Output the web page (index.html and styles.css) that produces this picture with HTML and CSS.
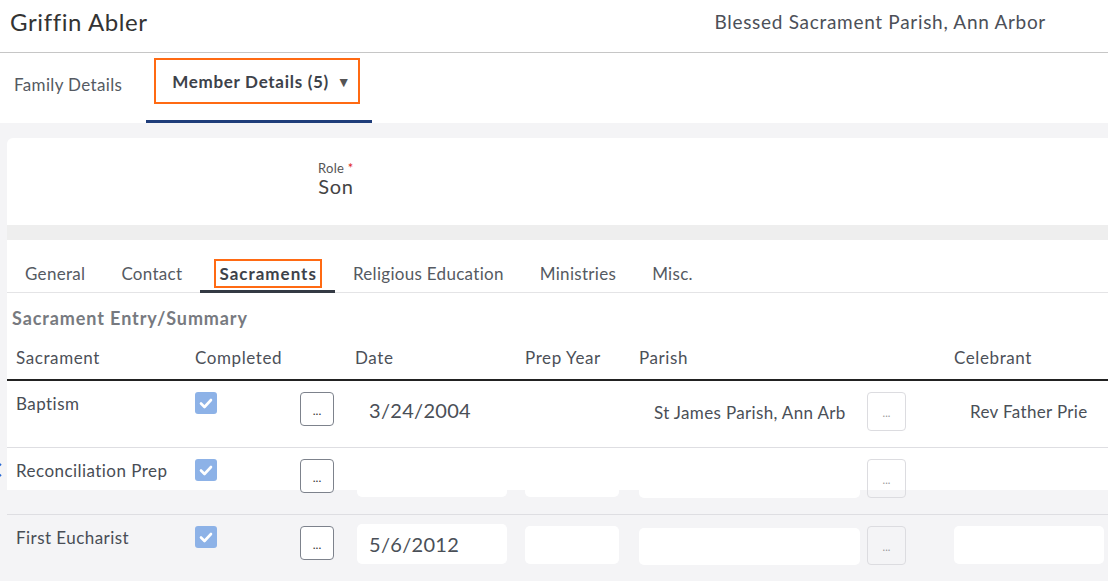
FILE: index.html
```html
<!DOCTYPE html>
<html lang="en">
<head>
<meta charset="utf-8">
<title>Griffin Abler</title>
<link rel="stylesheet" href="styles.css">
</head>
<body>
<header class="header">
  <div class="name">Griffin Abler</div>
  <div class="parish">Blessed Sacrament Parish, Ann Arbor</div>
</header>
<nav class="tabs">
  <div class="tab">Family Details</div>
  <div class="tab tab-active">
    <div class="tab-box">Member Details (5) <span class="caret">&#9660;</span></div>
  </div>
</nav>
<main class="content">
  <section class="card">
    <div class="role-area">
      <div class="field">
        <div class="field-label">Role <span class="req">*</span></div>
        <div class="field-value">Son</div>
      </div>
    </div>
    <div class="band"></div>
    <div class="subtabs">
      <div class="subtab">General</div>
      <div class="subtab">Contact</div>
      <div class="subtab subtab-active"><span class="hl">Sacraments</span></div>
      <div class="subtab">Religious Education</div>
      <div class="subtab">Ministries</div>
      <div class="subtab">Misc.</div>
    </div>
    <h2 class="section-title">Sacrament Entry/Summary</h2>
    <div class="table">
      <div class="trow thead">
        <div class="c c-sac">Sacrament</div>
        <div class="c c-done">Completed</div>
        <div class="c c-b1"></div>
        <div class="c c-date">Date</div>
        <div class="c c-prep">Prep Year</div>
        <div class="c c-par">Parish</div>
        <div class="c c-b2"></div>
        <div class="c c-cel">Celebrant</div>
      </div>

      <div class="trow row row-white">
        <div class="c c-sac"><span class="rtext">Baptism</span></div>
        <div class="c c-done"><span class="check"><svg viewBox="0 0 22 22" width="22" height="22"><path d="M6 11.5 L9.5 15 L16 8" fill="none" stroke="#fff" stroke-width="2.6" stroke-linecap="round" stroke-linejoin="round"/></svg></span></div>
        <div class="c c-b1"><span class="dots-btn">...</span></div>
        <div class="c c-date"><span class="inp inp-date">3/24/2004</span></div>
        <div class="c c-prep"><span class="inp inp-prep"></span></div>
        <div class="c c-par"><span class="inp inp-par"><span class="clip">St James Parish, Ann Arbor</span></span></div>
        <div class="c c-b2"><span class="dots-btn light">...</span></div>
        <div class="c c-cel"><span class="inp inp-cel"><span class="clip">Rev Father Priest</span></span></div>
      </div>

      <div class="trow row row-gray row-band">
        <svg class="edge-chev" viewBox="0 0 12 14" width="12" height="14"><path d="M10 1 L3 7 L10 13" fill="none" stroke="#2a6bd6" stroke-width="2"/></svg>
        <div class="c c-sac"><span class="rtext">Reconciliation Prep</span></div>
        <div class="c c-done"><span class="check"><svg viewBox="0 0 22 22" width="22" height="22"><path d="M6 11.5 L9.5 15 L16 8" fill="none" stroke="#fff" stroke-width="2.6" stroke-linecap="round" stroke-linejoin="round"/></svg></span></div>
        <div class="c c-b1"><span class="dots-btn">...</span></div>
        <div class="c c-date"><span class="inp inp-date"></span></div>
        <div class="c c-prep"><span class="inp inp-prep"></span></div>
        <div class="c c-par"><span class="inp inp-par"></span></div>
        <div class="c c-b2"><span class="dots-btn light clear">...</span></div>
        <div class="c c-cel"></div>
      </div>

      <div class="trow row row-gray">
        <div class="c c-sac"><span class="rtext">First Eucharist</span></div>
        <div class="c c-done"><span class="check"><svg viewBox="0 0 22 22" width="22" height="22"><path d="M6 11.5 L9.5 15 L16 8" fill="none" stroke="#fff" stroke-width="2.6" stroke-linecap="round" stroke-linejoin="round"/></svg></span></div>
        <div class="c c-b1"><span class="dots-btn">...</span></div>
        <div class="c c-date"><span class="inp inp-date">5/6/2012</span></div>
        <div class="c c-prep"><span class="inp inp-prep"></span></div>
        <div class="c c-par"><span class="inp inp-par"></span></div>
        <div class="c c-b2"><span class="dots-btn light clear">...</span></div>
        <div class="c c-cel"><span class="inp inp-cel"></span></div>
      </div>
    </div>
  </section>
</main>
</body>
</html>
```

FILE: styles.css
```css
* { box-sizing: border-box; }
html, body { margin: 0; padding: 0; }
body {
  width: 1108px;
  height: 581px;
  overflow: hidden;
  background: #f4f4f6;
  font-family: "Lato", "Open Sans", sans-serif;
  color: #484d55;
  letter-spacing: 0.35px;
}

.header {
  height: 53px;
  background: #fff;
  border-bottom: 1px solid #c6c6c6;
  display: flex;
  align-items: center;
  justify-content: space-between;
  padding: 0 62px 10px 10px;
}
.name { font-size: 24px; color: #333; letter-spacing: 0.6px; }
.parish { font-size: 19px; color: #4c5058; letter-spacing: 0.7px; }

.tabs {
  height: 70px;
  background: #fff;
  display: flex;
  align-items: stretch;
}
.tab {
  font-size: 17px;
  color: #555a62;
  padding: 0 14px;
  display: flex;
  align-items: center;
  padding-bottom: 8px;
}
.tab-active {
  width: 226px;
  margin-left: 10px;
  padding: 5px 12px 0 8px;
  align-items: flex-start;
  border-bottom: 3px solid #1f3d7a;
}
.tab-box {
  width: 206px;
  height: 46px;
  border: 2px solid #ff6a13;
  display: flex;
  align-items: center;
  justify-content: space-between;
  padding: 0 7px 0 16px;
  font-weight: 700;
  color: #3d424a;
  letter-spacing: 0.7px;
}
.caret { font-size: 14px; color: #555; }

.content { padding: 15px 0 0 7px; }
.card {
  background: #fff;
  border-top-left-radius: 6px;
  min-height: 460px;
}
.role-area {
  height: 87px;
  padding: 19px 0 0 311px;
}
.field { display: inline-flex; flex-direction: column; align-items: center; }
.field-label { font-size: 13px; color: #555; line-height: 16px; letter-spacing: 0.3px; }
.req { color: #e0251b; }
.field-value { font-size: 20px; color: #444; line-height: 20px; letter-spacing: 0.6px; }
.band { height: 15px; background: #eeeeee; }

.subtabs {
  display: flex;
  height: 53px;
  padding-top: 18px;
  border-bottom: 1px solid #e4e4e6;
}
.subtab {
  font-size: 17px;
  color: #555a62;
  padding: 0 18px;
  height: 35px;
  line-height: 31px;
  letter-spacing: 0.3px;
}
.subtab-active {
  padding: 0 17px 0 18px;
  border-bottom: 3px solid #343a44;
  font-weight: 700;
  color: #3d424a;
  letter-spacing: 1px;
}
.hl {
  outline: 2px solid #ff6a13;
  outline-offset: 2px;
  padding: 0 1px;
}

.section-title {
  margin: 0;
  font-size: 18px;
  font-weight: 700;
  color: #777a80;
  padding: 14px 0 0 5px;
  height: 50px;
  letter-spacing: 0.9px;
}

.trow {
  display: grid;
  grid-template-columns: 188px 105px 55px 170px 114px 228px 87px 1fr;
}
.thead {
  height: 38px;
  border-bottom: 2px solid #222;
  font-size: 17px;
  color: #4c5058;
  letter-spacing: 0.6px;
}
.thead .c { padding-top: 4px; white-space: nowrap; }
.thead .c-sac { padding-left: 9px; }

.row {
  position: relative;
  height: 67px;
  border-bottom: 1px solid #dedee2;
}
.row-white { background: #fff; }
.row-gray { background: #f4f4f6; }
.row-band::before {
  content: "";
  position: absolute;
  left: 0; right: 0; top: 0;
  height: 42px;
  background: #fff;
}
.row .c { position: relative; }
.rtext {
  display: block;
  padding: 11px 0 0 9px;
  font-size: 17px;
  line-height: 24px;
  color: #484d55;
  letter-spacing: 0.45px;
  white-space: nowrap;
}
.check {
  display: block;
  margin-top: 11px;
  width: 22px;
  height: 22px;
  border-radius: 3px;
  background: #8db2e7;
}
.check svg { display: block; }
.dots-btn {
  display: flex;
  align-items: center;
  justify-content: center;
  margin-top: 11px;
  width: 34px;
  height: 34px;
  border: 1px solid #7d828c;
  border-radius: 4px;
  background: #fff;
  font-size: 12px;
  color: #333;
  padding-top: 2px;
  letter-spacing: 0;
}
.dots-btn.light {
  width: 39px;
  height: 39px;
  border-color: #dcdce0;
  color: #999;
  font-size: 11px;
}
.dots-btn.clear { background: transparent; }

.inp {
  display: block;
  background: #fff;
  border-radius: 5px;
  white-space: nowrap;
  overflow: hidden;
  color: #4a4f57;
}
.clip {
  display: block;
  overflow: hidden;
  white-space: nowrap;
}
.inp-date {
  margin: 9px 0 0 2px;
  width: 150px;
  height: 40px;
  padding-left: 12px;
  font-size: 20px;
  line-height: 40px;
  letter-spacing: 0.3px;
}
.inp-prep {
  margin-top: 11px;
  width: 94px;
  height: 38px;
}
.inp-par {
  margin-top: 13px;
  width: 221px;
  height: 37px;
  padding: 0 14px 0 15px;
  font-size: 17px;
  line-height: 37px;
  letter-spacing: 0.35px;
}
.inp-cel {
  margin-top: 11px;
  width: 150px;
  height: 38px;
  padding: 0 16px;
  font-size: 17px;
  line-height: 40px;
  letter-spacing: 0.35px;
}
.edge-chev {
  position: absolute;
  left: -16px;
  top: 15px;
  z-index: 2;
}
```
